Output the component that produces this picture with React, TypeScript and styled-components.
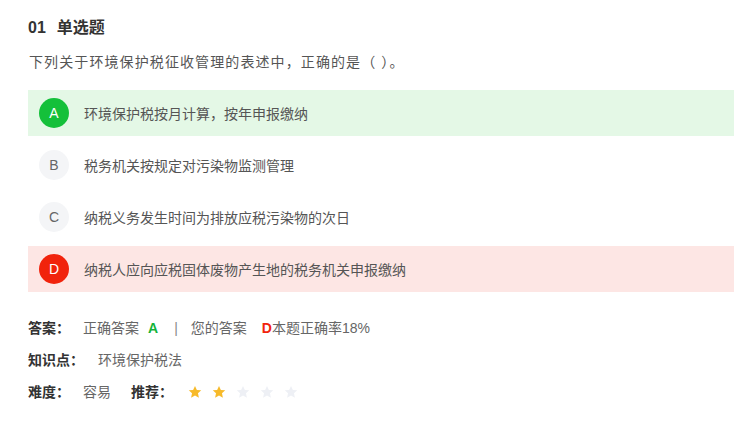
import React from 'react';
import styled, { createGlobalStyle } from 'styled-components';

const GlobalStyle = createGlobalStyle`
  body {
    margin: 0;
    background: #fff;
    font-family: "Liberation Sans", Arial, "Noto Sans CJK SC", sans-serif;
  }
`;

const Page = styled.div`
  padding: 18px 0 20px 28px;
`;

const Title = styled.h2`
  margin: 0;
  font-size: 16px;
  line-height: 20px;
  font-weight: bold;
  color: #333;
  display: flex;
  gap: 11px;
`;

const Question = styled.p`
  margin: 14px 0 0 1px;
  font-size: 14px;
  line-height: 20px;
  color: #555;
  letter-spacing: 1.1px;
`;

const Options = styled.div`
  margin-top: 18px;
  display: flex;
  flex-direction: column;
  gap: 6px;
`;

type State = 'right' | 'wrong' | 'none';

const rowBg: Record<State, string> = {
  right: '#e4f8e6',
  wrong: '#fde6e4',
  none: 'transparent',
};

const circleBg: Record<State, string> = {
  right: '#14c03a',
  wrong: '#f1230c',
  none: '#f4f5f7',
};

const Row = styled.div<{ $state: State }>`
  height: 46px;
  display: flex;
  align-items: center;
  padding-left: 11px;
  gap: 15px;
  background: ${p => rowBg[p.$state]};
`;

const Circle = styled.span<{ $state: State }>`
  width: 30px;
  height: 30px;
  border-radius: 50%;
  display: flex;
  align-items: center;
  justify-content: center;
  font-size: 14px;
  background: ${p => circleBg[p.$state]};
  color: ${p => (p.$state === 'none' ? '#666' : '#fff')};
`;

const OptionText = styled.span`
  font-size: 14px;
  color: #555;
`;

const Info = styled.div`
  margin-top: 26px;
  display: flex;
  flex-direction: column;
  gap: 12px;
`;

const Line = styled.div`
  display: flex;
  align-items: center;
  font-size: 14px;
  line-height: 20px;
  color: #666;
`;

const Label = styled.span<{ $gap?: number }>`
  font-weight: bold;
  color: #333;
  margin-right: ${p => p.$gap ?? 13}px;
`;

const Mark = styled.span<{ $color: string }>`
  font-weight: bold;
  font-size: 14px;
  color: ${p => p.$color};
`;

const Sep = styled.span`
  margin: 0 13px 0 16px;
  color: #888;
`;

const Stars = styled.span`
  display: flex;
  gap: 10px;
`;

const Star: React.FC<{ on: boolean }> = ({ on }) => (
  <svg width="14" height="14" viewBox="0 0 24 24">
    <path
      d="M12 1.5l3.2 6.9 7.5.8-5.6 5.1 1.6 7.4L12 17.9l-6.7 3.8 1.6-7.4-5.6-5.1 7.5-.8z"
      fill={on ? '#f7ba2a' : '#eef0f5'}
    />
  </svg>
);

const options: { key: string; text: string; state: State }[] = [
  { key: 'A', text: '环境保护税按月计算，按年申报缴纳', state: 'right' },
  { key: 'B', text: '税务机关按规定对污染物监测管理', state: 'none' },
  { key: 'C', text: '纳税义务发生时间为排放应税污染物的次日', state: 'none' },
  { key: 'D', text: '纳税人应向应税固体废物产生地的税务机关申报缴纳', state: 'wrong' },
];

export default function App() {
  return (
    <Page>
      <GlobalStyle />
      <Title>
        <span>01</span>
        <span>单选题</span>
      </Title>
      <Question>下列关于环境保护税征收管理的表述中，正确的是（ ）。</Question>
      <Options>
        {options.map(o => (
          <Row key={o.key} $state={o.state}>
            <Circle $state={o.state}>{o.key}</Circle>
            <OptionText>{o.text}</OptionText>
          </Row>
        ))}
      </Options>
      <Info>
        <Line>
          <Label>答案：</Label>
          <span>正确答案</span>
          <Mark $color="#14b33a" style={{ marginLeft: 9 }}>A</Mark>
          <Sep>|</Sep>
          <span>您的答案</span>
          <Mark $color="#f1230c" style={{ marginLeft: 15 }}>D</Mark>
          <span>本题正确率18%</span>
        </Line>
        <Line>
          <Label $gap={14}>知识点：</Label>
          <span>环境保护税法</span>
        </Line>
        <Line>
          <Label>难度：</Label>
          <span>容易</span>
          <Label style={{ marginLeft: 20 }} $gap={15}>推荐：</Label>
          <Stars>
            {[1, 2, 3, 4, 5].map(i => (
              <Star key={i} on={i <= 2} />
            ))}
          </Stars>
        </Line>
      </Info>
    </Page>
  );
}
